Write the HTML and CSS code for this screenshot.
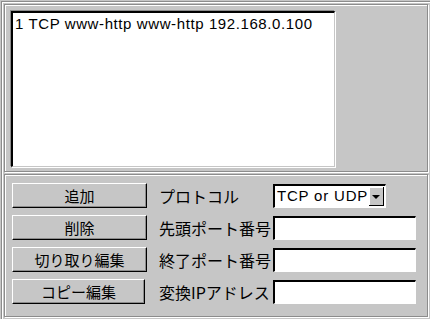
FILE: index.html
```html
<!DOCTYPE html>
<html lang="ja">
<head>
    <meta charset="UTF-8">
    <title>ポート転送</title>
    <link rel="stylesheet" href="styles.css">
</head>
<body>
    <div class="window">
        <!-- rule list -->
        <div class="panel list-panel">
            <div class="rule-list">
                <div class="rule-item">1 TCP www-http www-http 192.168.0.100</div>
            </div>
        </div>

        <!-- edit form -->
        <div class="panel form-panel">
            <button class="btn">追加</button>
            <span class="label">プロトコル</span>
            <div class="select">
                <span class="select-text">TCP or UDP</span>
                <span class="select-arrow"></span>
            </div>

            <button class="btn">削除</button>
            <span class="label">先頭ポート番号</span>
            <input class="field" type="text">

            <button class="btn">切り取り編集</button>
            <span class="label">終了ポート番号</span>
            <input class="field" type="text">

            <button class="btn btn-narrow">コピー編集</button>
            <span class="label">変換IPアドレス</span>
            <input class="field" type="text">
        </div>
    </div>
</body>
</html>
```

FILE: styles.css
```css
body {
    margin: 0;
    width: 430px;
    height: 319px;
    background: #c6c6c6;
    font-family: "Noto Sans CJK JP", "Liberation Sans", sans-serif;
    color: #000;
    overflow: hidden;
}

.window {
    margin: 1px;
    width: 424px;
    height: 313px;
    border: 1px solid #8c8c8c;
    box-shadow: inset 1px 1px #fff, 1px 1px #fff;
    padding: 2px;
    display: flex;
    flex-direction: column;
    gap: 2px;
}

.panel {
    border: 1px solid #8c8c8c;
    box-shadow: inset 1px 1px #fff, 1px 1px #fff;
}

.list-panel {
    padding: 5px;
    box-sizing: border-box;
    height: 168px;
}

.rule-list {
    width: 321px;
    height: 153px;
    background: #fff;
    border-top: 2px solid #000;
    border-left: 2px solid #000;
    border-right: 1px solid #c6c6c6;
    border-bottom: 1px solid #c6c6c6;
    box-shadow: -1px -1px #8c8c8c, 1px 1px #fff;
    margin: 1px;
}

.rule-item {
    font-family: "Liberation Sans", sans-serif;
    font-size: 15px;
    letter-spacing: 0.6px;
    line-height: 16px;
    padding: 3px 0 0 2px;
}

.form-panel {
    flex: 1;
    display: grid;
    grid-template-columns: 135px 126px 143px;
    grid-auto-rows: 25px;
    row-gap: 7px;
    align-items: center;
    padding: 8px 0 0 7px;
}

.btn {
    height: 25px;
    margin: 0;
    padding: 0;
    background: #c6c6c6;
    border: 1px solid;
    border-color: #fff #000 #000 #fff;
    box-shadow: inset -1px -1px #8c8c8c;
    font-family: "Noto Sans CJK JP", sans-serif;
    font-size: 15px;
    line-height: 20px;
    color: #000;
}

.btn-narrow {
    width: 133px;
}

.label {
    font-size: 16px;
    line-height: 20px;
    padding-left: 12px;
    white-space: nowrap;
}

.select {
    width: 113px;
    height: 24px;
    box-sizing: border-box;
    display: flex;
    align-items: stretch;
    background: #fff;
    border-top: 2px solid #000;
    border-left: 2px solid #000;
    border-right: 1px solid #fff;
    border-bottom: 1px solid #fff;
}

.select-text {
    flex: 1;
    font-family: "Liberation Sans", sans-serif;
    font-size: 15px;
    letter-spacing: 0.8px;
    line-height: 20px;
    padding-left: 2px;
    white-space: nowrap;
}

.select-arrow {
    width: 14px;
    background: #c6c6c6;
    border-right: 1px solid #000;
    border-bottom: 1px solid #000;
    box-shadow: inset 1px 1px #fff;
    position: relative;
    margin: 1px;
}

.select-arrow::after {
    content: "";
    position: absolute;
    left: 3px;
    top: 8px;
    border-left: 4px solid transparent;
    border-right: 4px solid transparent;
    border-top: 4px solid #000;
}

.field {
    width: 143px;
    height: 24px;
    box-sizing: border-box;
    margin: 0;
    background: #fff;
    border-top: 2px solid #000;
    border-left: 2px solid #000;
    border-right: 1px solid #fff;
    border-bottom: 1px solid #fff;
    outline: none;
}
```
